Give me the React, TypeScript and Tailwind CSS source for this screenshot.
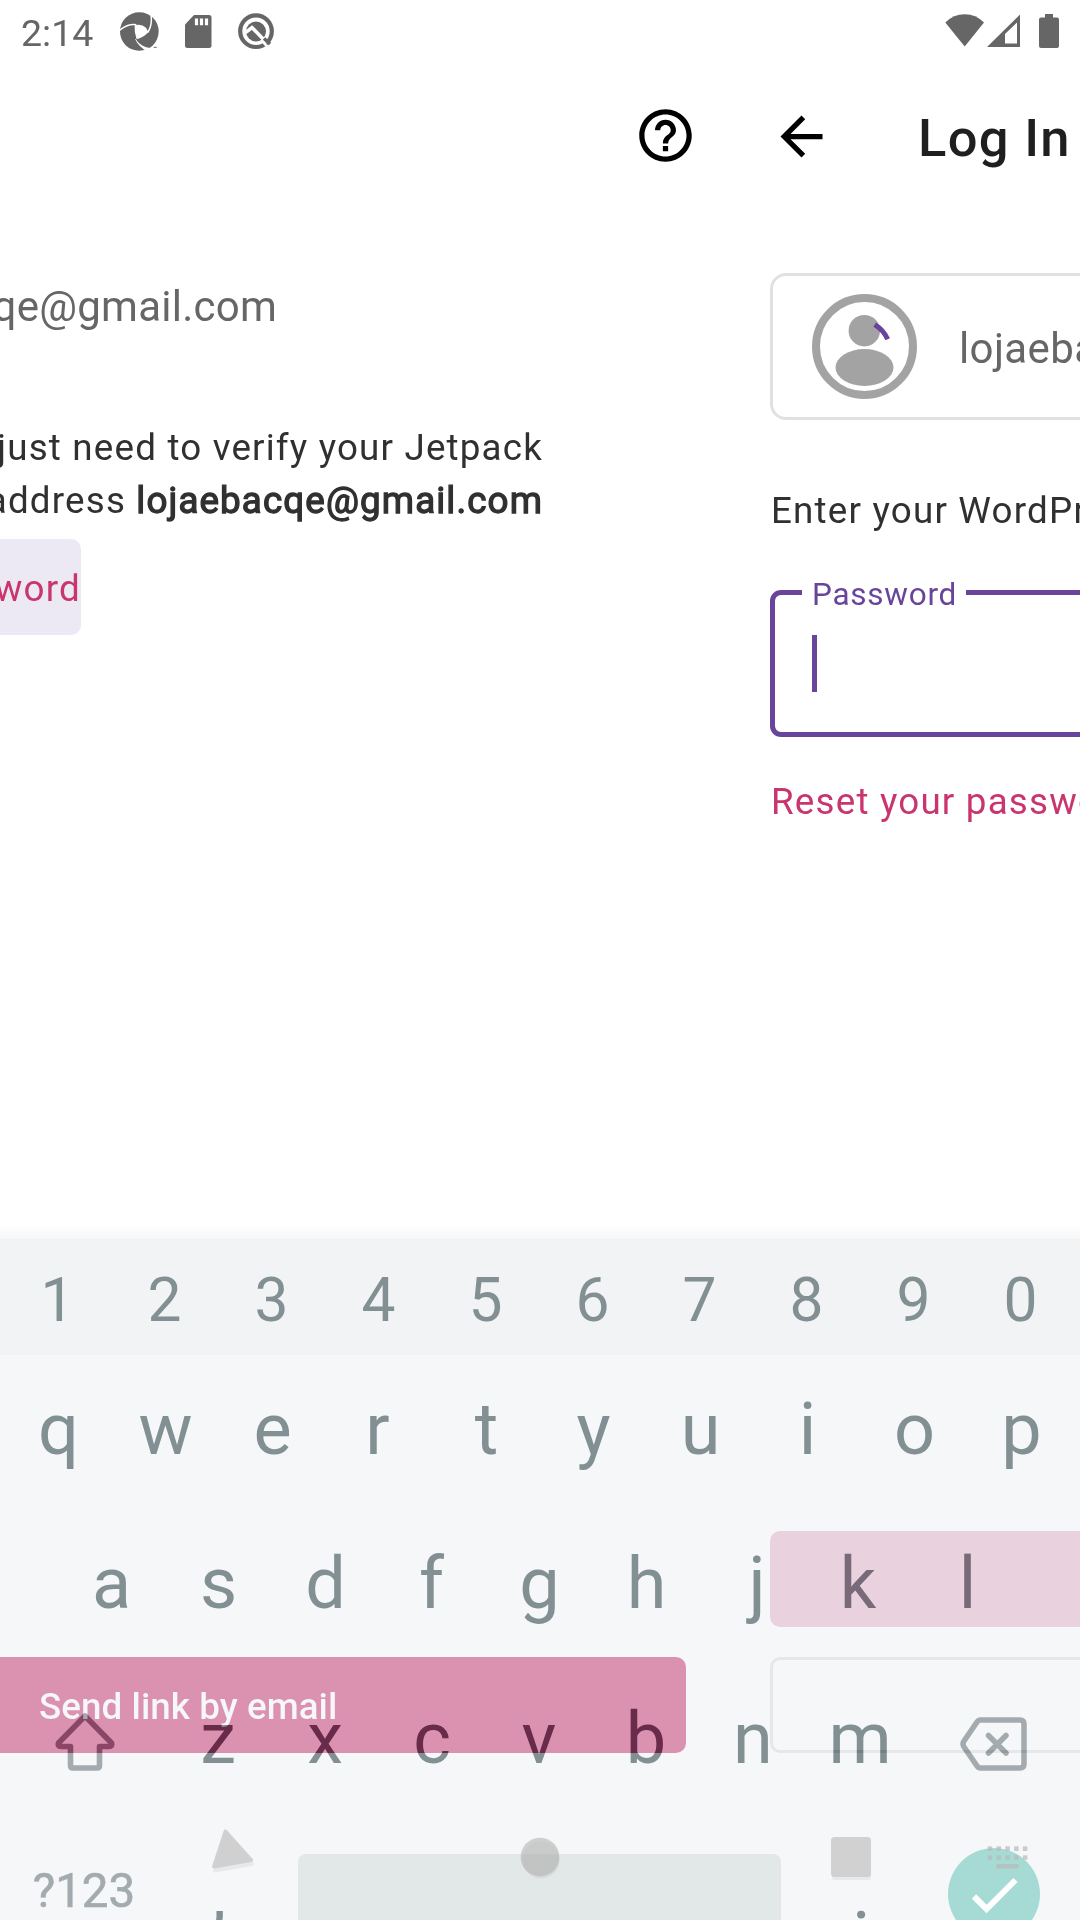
import React from 'react';

const digits = ['1', '2', '3', '4', '5', '6', '7', '8', '9', '0'];
const rowOne = ['q', 'w', 'e', 'r', 't', 'y', 'u', 'i', 'o', 'p'];
const rowTwo = ['a', 's', 'd', 'f', 'g', 'h', 'j', 'k', 'l'];
const rowThree = ['z', 'x', 'c', 'v', 'b', 'n', 'm'];

/* Optical centring for glyphs with uneven side bearings. */
const optical: Record<string, string> = {
  j: 'pl-[7px]',
  k: 'pr-[5px]',
  f: 'pr-[2px]',
  r: 'pr-[4px]',
};

function StatusBar() {
  return (
    <header className="flex h-[63px] items-start text-[#666666]">
      <span className="ml-[21px] mt-[9px] w-[99px] text-[37.5px] leading-[48px] tracking-[0px]">2:14</span>
      {/* camera shutter */}
      <svg className="mt-[12px] h-[39px] w-[39px]" viewBox="361 36 117 117">
        <circle cx="419" cy="94.500" r="58" fill="currentColor" />
        <path d="M405 76 Q425 70 439 83 L446 96 Q434 112 411 118 Q403 98 405 76Z" fill="#fff" />
        <path d="M359 92 Q382 71 410 74 M453 40 Q460 72 444 98" fill="none" stroke="#fff" strokeWidth="4.500" />
        <path d="M408 117 Q420 136 440 142 Q452 145 466 143 L446 156 Q418 142 406 117Z" fill="#fff" />
        <path d="M462 142 h9" stroke="currentColor" strokeWidth="3" />
      </svg>
      {/* memory card */}
      <svg className="ml-[26px] mt-[15px] h-[33px] w-[27px]" viewBox="0 0 27 33">
        <path d="M9 0 H24 Q26.500 0 26.500 2.500 V30.500 Q26.500 33 24 33 H2.500 Q0 33 0 30.500 V9.500Z" fill="currentColor" />
        <path d="M11.500 3.500 V10.300 M16.500 3.500 V10.300 M21.500 3.500 V10.300" stroke="#fff" strokeWidth="3.200" />
      </svg>
      {/* search ring */}
      <svg className="ml-[26px] mt-[13px] h-[37px] w-[37px]" viewBox="0 0 37 37">
        <circle cx="18" cy="18.200" r="15.800" fill="none" stroke="currentColor" strokeWidth="4.200" />
        <circle cx="18" cy="18.500" r="10" fill="currentColor" />
        <path d="M7.500 19.500 L14 14.500 L29 30" fill="none" stroke="#fff" strokeWidth="3.500" />
        <path d="M26 25.500 L32 31" stroke="currentColor" strokeWidth="3.500" />
        <path d="M24 28 L29.500 34" stroke="#fff" strokeWidth="2.500" />
      </svg>
      <div className="flex-1" />
      <svg className="mt-[14px] h-[33px] w-[40px]" viewBox="0 0 40 33">
        <path d="M0.300 8.500 Q8.500 0.200 19.700 0.200 T39 8.500 L19.700 32.500Z" fill="currentColor" />
      </svg>
      <svg className="ml-[2px] mt-[14px] h-[33px] w-[33px]" viewBox="0 0 33 33">
        <path fillRule="evenodd" d="M33 0.500 V33 H0Z M30 8.500 L18 20 V29.500 H30Z" fill="currentColor" />
      </svg>
      <svg className="ml-[19px] mr-[21px] mt-[14px] h-[34px] w-[20px]" viewBox="0 0 20 34">
        <path d="M6 0 H14 V3.500 H18 Q20 3.500 20 5.500 V32 Q20 34 18 34 H2 Q0 34 0 32 V5.500 Q0 3.500 2 3.500 H6Z" fill="currentColor" />
      </svg>
    </header>
  );
}

function MagicLinkPane() {
  return (
    <section className="flex w-[728px] flex-col overflow-hidden">
      <div className="flex h-[147px] items-center justify-end pr-[31.5px]">
        <svg className="relative top-[-1px] h-[63px] w-[63px]" viewBox="0 0 24 24" fill="#000">
          <path d="M11 18h2v-2h-2v2zm1-16C6.480 2 2 6.480 2 12s4.480 10 10 10 10-4.480 10-10S17.520 2 12 2zm0 18c-4.410 0-8-3.590-8-8s3.590-8 8-8 8 3.590 8 8-3.590 8-8 8zm0-14c-2.210 0-4 1.790-4 4h2c0-1.100.9-2 2-2s2 .9 2 2c0 2-3 1.750-3 5h2c0-2.250 3-2.500 3-5 0-2.210-1.790-4-4-4z" />
        </svg>
      </div>
      <div className="mt-[72px] flex w-[277px] justify-end whitespace-nowrap text-[42px] leading-[50px] tracking-[0.25px] text-[#666666]">
        qe@gmail.com
      </div>
      <div className="mt-[89px] flex w-[543px] flex-col items-end whitespace-nowrap text-[36.75px] leading-[53px] tracking-[1.18px] text-[#303030]">
        <div>just need to verify your Jetpack</div>
        <div className="whitespace-pre">address <b className="font-normal tracking-[1.12px] [-webkit-text-stroke:1.3px_#303030]">lojaebacqe@gmail.com</b></div>
      </div>
      <div className="mt-[12px] flex h-[96px] w-[81px] items-center justify-end rounded-r-[10px] bg-[#ece8f4] pt-[3px] text-[36.75px] tracking-[1.2px] text-[#c9356e]">
        word
      </div>
    </section>
  );
}

function PasswordPane() {
  return (
    <section className="flex w-[352px] flex-col overflow-hidden whitespace-nowrap">
      <div className="flex h-[147px] items-center pl-[42px]">
        <svg className="h-[63px] w-[63px]" viewBox="0 0 24 24" fill="#000">
          <path d="M20 11H7.830l5.590-5.590L12 4l-8 8 8 8 1.410-1.410L7.830 13H20v-2z" />
        </svg>
        <h1 className="ml-[84px] pl-px pt-[3px] text-[52.5px] font-medium leading-[60px] tracking-[1.3px] text-[#1f1f1f]">Log In</h1>
      </div>
      <div className="ml-[42px] mt-[63px] flex h-[147px] w-[996px] shrink-0 items-center rounded-[16px] border-[3px] border-[#e1e1e1] pl-[39px]">
        <svg className="h-[105px] w-[105px] shrink-0" viewBox="0 0 105 105">
          <circle cx="52.500" cy="52.500" r="48.500" fill="none" stroke="#a3a3a3" strokeWidth="8" />
          <circle cx="52.300" cy="36.700" r="15.700" fill="#a3a3a3" />
          <ellipse cx="52.500" cy="73.500" rx="29" ry="18.500" fill="#a3a3a3" />
          <path d="M62.700 30.700 Q71.500 36 75.700 45.300" fill="none" stroke="#68459a" strokeWidth="5" />
        </svg>
        <span className="ml-[42px] pt-[4px] text-[42px] leading-[50px] tracking-[0.38px] text-[#666666]">lojaebacqe@gmail.com</span>
      </div>
      <p className="ml-[43px] mt-[64px] text-[36.75px] leading-[53px] tracking-[1.2px] text-[#303030]">Enter your WordPress.com password.</p>
      <div className="relative ml-[42px] mt-[53px] h-[147px] w-[996px] shrink-0 rounded-[11px] border-[5px] border-[#68459a] pl-[37px] pt-[40px]">
        <div className="h-[57px] w-[5px] bg-[#68459a]" />
        <span className="absolute left-[27px] top-[-18px] w-[164px] bg-white pl-[10px] text-[31.5px] leading-[36px] tracking-[0.75px] text-[#68459a]">Password</span>
      </div>
      <p className="ml-[43px] mt-[38px] text-[36.75px] leading-[53px] tracking-[1.2px] text-[#c9356e]">Reset your password?</p>
    </section>
  );
}

function KeyRow({ keys }: { keys: string[] }) {
  return (
    <>
      {keys.map((k) => (
        <span key={k} className={`w-[107px] text-center ${optical[k] ?? ''}`}>{k}</span>
      ))}
    </>
  );
}

function Keyboard() {
  return (
    <section className="absolute left-0 top-[1239px] flex h-[681px] w-[1080px] flex-col overflow-hidden bg-[#f5f7f9] text-[#839093]">
      <div className="flex h-[116px] shrink-0 items-center bg-[#f1f3f5] pl-[4px] pt-[8px] text-[60.5px] leading-none">
        <KeyRow keys={digits} />
      </div>
      <div className="flex h-[154px] shrink-0 items-center pb-[5px] pl-[5px] text-[72px] leading-none">
        <KeyRow keys={rowOne} />
      </div>
      <div className="flex h-[155px] shrink-0 items-center pb-[5px] pl-[58px] text-[72px] leading-none">
        <KeyRow keys={rowTwo} />
      </div>
      <div className="flex h-[154px] shrink-0 items-center pb-[5px] text-[72px] leading-none">
        <svg className="ml-[55px] mr-[49.5px] mt-[7px] h-[60px] w-[60px]" viewBox="0 0 60 60" fill="none" stroke="#a3abaf" strokeWidth="5.600" strokeLinejoin="round">
          <path d="M30 4 L56.500 31 Q57.500 34.500 54 34.500 H44.500 V53.500 Q44.500 56 42 56 H18 Q15.500 56 15.500 53.500 V34.500 H6 Q2.500 34.500 3.500 31Z" />
        </svg>
        <KeyRow keys={rowThree} />
        <svg className="ml-[46.5px] mt-[11px] h-[54px] w-[67px]" viewBox="0 0 67 54" fill="none" stroke="#a3abaf" strokeWidth="5.500" strokeLinejoin="round" strokeLinecap="round">
          <path d="M20 3 H60 Q64 3 64 7 V47 Q64 51 60 51 H20 Q18.500 51 17 49 L4 30 Q2 27 4 24 L17 5 Q18.500 3 20 3Z" />
          <path d="M28.500 18.500 L46 36 M46 18.500 L28.500 36" />
        </svg>
      </div>
      <div className="flex h-[154px] shrink-0 items-center pb-[3px] text-[72px] leading-none">
        <span className="w-[168px] pb-[3px] text-center text-[47.5px] text-[#a3abaf] [-webkit-text-stroke:0.6px_#a3abaf]">?123</span>
        <span className="w-[130px] pr-[28px] pt-[2px] text-center">,</span>
        <span className="h-[80px] w-[483px] rounded-[8px] bg-[#e2e7e8]" />
        <span className="w-[167px] pr-[6px] pt-[1px] text-center">.</span>
        <span className="flex h-[92px] w-[92px] items-center justify-center rounded-full bg-[#a6dbd5]">
          <svg className="h-[92px] w-[92px]" viewBox="0 0 92 92" fill="none" stroke="#fff" strokeWidth="6">
            <path d="M26 48.500 L38.600 61 L67.500 32" />
          </svg>
        </span>
      </div>
    </section>
  );
}

function NavButtons() {
  return (
    <div className="absolute left-0 top-[1820px] h-[64px] w-[1080px]">
      <svg className="h-[64px] w-[1080px]" viewBox="0 1820 1080 64">
        <g opacity="0.05" transform="translate(1 4)" fill="#000" stroke="#000" strokeWidth="4" strokeLinejoin="round">
          <path d="M225.500 1831.500 L251 1860 L214 1866.500Z" />
          <circle cx="540" cy="1856" r="16.500" />
          <rect x="833" y="1839" width="35" height="35" />
        </g>
        <g opacity="0.97" strokeWidth="4" strokeLinejoin="round">
          <path d="M225.500 1831.500 L251 1860 L214 1866.500Z" fill="#d0d0d0" stroke="#d0d0d0" />
          <rect x="831" y="1837" width="40" height="40" rx="3.500" fill="#d0d0d0" />
        </g>
        <circle cx="540" cy="1857" r="19.300" fill="#b7b7b7" opacity="0.62" />
        <g fill="#b9b9b9" opacity="0.7">
          {[0, 1, 2, 3, 4].map((i) => (
            <React.Fragment key={i}>
              <rect x={987.7 + i * 8.8} y="1846.300" width="4.500" height="4.700" />
              <rect x={987.7 + i * 8.8} y="1855.300" width="4.500" height="4.500" />
            </React.Fragment>
          ))}
          <rect x="996.600" y="1864" width="22" height="4.500" />
        </g>
      </svg>
    </div>
  );
}

/* Buttons of both panes, fading through the translucent keyboard. */
function FadingButtons() {
  return (
    <>
      <button className="absolute left-[770px] top-[1531px] h-24 w-[310px] rounded-l-[10px] bg-[#0b261b] mix-blend-difference" />
      <button className="absolute left-0 top-[1657px] flex h-24 w-[686px] items-center rounded-r-[10px] bg-[#1a6549] pl-[39px] pt-[3px] text-[36.75px] font-medium tracking-[0.05px] text-black mix-blend-difference">
        Send link by email
      </button>
      <button className="absolute left-[770px] top-[1657px] h-24 w-[310px] rounded-l-[10px] border-[3px] border-r-0 border-[#101010] mix-blend-difference" />
    </>
  );
}

export default function App() {
  return (
    <main className="relative h-[1920px] w-[1080px] overflow-hidden bg-white font-['Roboto',sans-serif]">
      <StatusBar />
      <div className="flex h-[1161px]">
        <MagicLinkPane />
        <PasswordPane />
      </div>
      <div className="h-[15px] bg-gradient-to-b from-white to-[#f7f7f7]" />
      <Keyboard />
      <NavButtons />
      <FadingButtons />
    </main>
  );
}
